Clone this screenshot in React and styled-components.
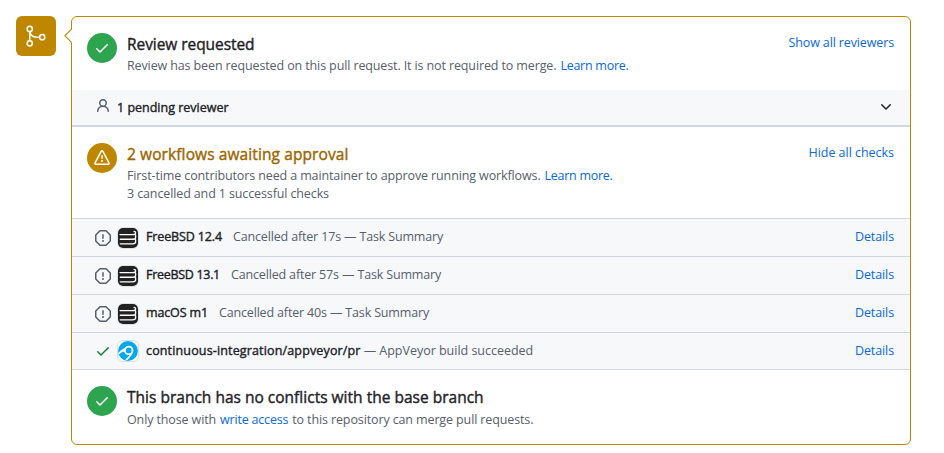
import React from 'react';
import styled, { createGlobalStyle, css } from 'styled-components';

const GlobalStyle = createGlobalStyle`
  * { box-sizing: border-box; }
  body {
    margin: 0;
    background: #fff;
    color: #1f2328;
    font: 400 12.5px/18px "Open Sans", "Noto Sans", sans-serif;
  }
`;

/* A weight between medium and semibold. */
const emphasis = css`
  font-weight: 500;
  -webkit-text-stroke: 0.4px currentColor;
`;

const Timeline = styled.main`
  display: flex;
  align-items: flex-start;
  gap: 15px;
  padding: 16px 33px 8px 16px;
`;

const MergeBadge = styled.div`
  flex: none;
  width: 40px;
  height: 40px;
  border-radius: 6px;
  background: #bf8700;
`;

const Card = styled.div`
  position: relative;
  flex: 1;
  min-width: 0;
  border: 1px solid #bf8700;
  border-radius: 6px;
`;

const Caret = styled.svg`
  position: absolute;
  top: 10px;
  left: -8px;
  display: block;
`;

const Section = styled.section`
  display: flex;
  align-items: flex-start;
  padding: 15px 16px 15px 15px;
`;

const StatusCircle = styled.span`
  flex: none;
  display: flex;
  align-items: center;
  justify-content: center;
  width: 30px;
  height: 30px;
  margin: 1px 10px 0 0;
  border-radius: 50%;
  color: #fff;
  background: ${(p) => (p.$tone === 'attention' ? '#bf8700' : '#2da44e')};
`;

const Body = styled.div`
  flex: 1;
  min-width: 0;
  white-space: nowrap;
`;

const Title = styled.h3`
  ${emphasis}
  margin: 0 0 ${(p) => p.$gap || 1}px;
  font-size: 15.5px;
  line-height: 24px;
  letter-spacing: ${(p) => p.$track}px;
  color: ${(p) => (p.$tone === 'attention' ? '#9a6700' : '#1f2328')};
`;

const Note = styled.p`
  display: flex;
  gap: 4px;
  margin: 0;
  color: #57606a;
`;

const Text = styled.span`
  letter-spacing: ${(p) => p.$track}px;
`;

const Link = styled.a`
  flex: none;
  color: #0969da;
  letter-spacing: ${(p) => p.$track}px;
  white-space: nowrap;
`;

const ToggleLink = styled(Link)`
  margin-top: 1px;
  line-height: 20px;
`;

const ReviewerBar = styled.div`
  display: flex;
  align-items: center;
  height: 37px;
  padding: 0 16px 2px 23px;
  border-bottom: 2px solid #d0d7de;
  background: #f6f8fa;
`;

const ReviewerLabel = styled.strong`
  ${emphasis}
  flex: 1;
  margin-left: 6px;
  padding-top: 2px;
`;

const Glyph = styled.svg`
  flex: none;
  display: block;
  fill: currentColor;
  color: ${(p) => p.$color || 'inherit'};
`;

const PersonGlyph = styled(Glyph)`
  margin-bottom: 2px;
`;

const CheckList = styled.ul`
  margin: 0;
  padding: 0;
  list-style: none;
  border-top: 1px solid #d0d7de;
`;

const CheckRow = styled.li`
  display: flex;
  align-items: center;
  height: 38px;
  padding: 0 16px 0 23px;
  border-bottom: 1px solid #d0d7de;
  background: #f6f8fa;
  white-space: nowrap;

  &:last-child { height: 37px; }
`;

const AppIcon = styled.svg`
  flex: none;
  display: block;
  margin: 0 7px 0 6px;
`;

const CheckText = styled.div`
  flex: 1;
  display: flex;
  gap: ${(p) => p.$gap}px;
  padding-bottom: 1px;
  color: #57606a;
`;

const CheckName = styled.strong`
  ${emphasis}
  color: #1f2328;
  letter-spacing: ${(p) => p.$track}px;
`;

const DetailsLink = styled(Link)`
  padding-bottom: 1px;
`;

const paths = {
  check:
    'M13.78 4.22a.75.75 0 0 1 0 1.06l-7.25 7.25a.75.75 0 0 1-1.06 0L2.22 9.28a.751.751 0 0 1 .018-1.042.751.751 0 0 1 1.042-.018L6 10.94l6.72-6.72a.75.75 0 0 1 1.06 0Z',
  alert:
    'M6.457 1.047c.659-1.234 2.427-1.234 3.086 0l6.082 11.378A1.75 1.75 0 0 1 14.082 15H1.918a1.75 1.75 0 0 1-1.543-2.575Zm1.763.707a.25.25 0 0 0-.44 0L1.698 13.132a.25.25 0 0 0 .22.368h12.164a.25.25 0 0 0 .22-.368Zm.53 3.996v2.5a.75.75 0 0 1-1.5 0v-2.5a.75.75 0 0 1 1.5 0ZM9 11a1 1 0 1 1-2 0 1 1 0 0 1 2 0Z',
  stop:
    'M4.47.22A.749.749 0 0 1 5 0h6c.199 0 .389.079.53.22l4.25 4.25c.141.14.22.331.22.53v6a.749.749 0 0 1-.22.53l-4.25 4.25A.749.749 0 0 1 11 16H5a.749.749 0 0 1-.53-.22L.22 11.53A.749.749 0 0 1 0 11V5c0-.199.079-.389.22-.53Zm.84 1.28L1.5 5.31v5.38l3.81 3.81h5.38l3.81-3.81V5.31L10.69 1.5ZM8 4a.75.75 0 0 1 .75.75v3.5a.75.75 0 0 1-1.5 0v-3.5A.75.75 0 0 1 8 4Zm0 8a1 1 0 1 1 0-2 1 1 0 0 1 0 2Z',
  person:
    'M10.561 8.073a6.005 6.005 0 0 1 3.432 5.142.75.75 0 1 1-1.498.07 4.5 4.5 0 0 0-8.99 0 .75.75 0 0 1-1.498-.07 6.004 6.004 0 0 1 3.431-5.142 3.999 3.999 0 1 1 5.123 0ZM10.5 5a2.5 2.5 0 1 0-5 0 2.5 2.5 0 0 0 5 0Z',
  chevron:
    'M12.78 5.22a.749.749 0 0 1 0 1.06l-4.25 4.25a.749.749 0 0 1-1.06 0L3.22 6.28a.749.749 0 1 1 1.06-1.06L8 8.939l3.72-3.719a.749.749 0 0 1 1.06 0Z',
};

const Icon = ({ name, color, as: Component = Glyph }) => (
  <Component width="16" height="16" viewBox="0 0 16 16" $color={color}>
    <path d={paths[name]} />
  </Component>
);

const MergeIcon = () => (
  <svg width="40" height="40" viewBox="0 0 40 40" fill="none" stroke="#fff" strokeWidth="1.5">
    <circle cx="13.75" cy="12.9" r="2.6" />
    <circle cx="13.75" cy="27.3" r="2.6" />
    <circle cx="26.2" cy="21.2" r="2.6" />
    <path d="M13.75 15.4v9.4M13.75 15.4c.4 3.8 3.4 5.8 7 5.8h3" />
  </svg>
);

const CirrusIcon = () => (
  <AppIcon width="22" height="22" viewBox="0 0 22 22">
    <rect x=".5" y=".5" width="21" height="21" rx="5.5" fill="#fff" stroke="#dfe2e5" />
    <rect x="1" y="1" width="20" height="20" rx="5" fill="#212121" />
    <path
      d="M3 7.6h12.6c2.1 0 3-.6 3-1.7 0-1-.6-1.5-1.5-1.5M3.3 12.2h12.4c2.1 0 2.9-.7 2.9-1.8V8.1M3.3 16.8h12.4c2.1 0 2.9-.7 2.9-1.8v-2.3"
      fill="none"
      stroke="#fff"
      strokeWidth="1.35"
      strokeLinecap="round"
    />
  </AppIcon>
);

const AppVeyorIcon = () => (
  <AppIcon width="22" height="22" viewBox="0 0 22 22">
    <rect x=".5" y=".5" width="21" height="21" rx="5.5" fill="#fff" stroke="#d8dee4" />
    <circle cx="11" cy="11" r="9.9" fill="#00a8ef" />
    <circle cx="11.7" cy="10.4" r="3.8" fill="none" stroke="#fff" strokeWidth="1.8" />
    <path d="M15.9 11.2c-.2 3.3-2.8 6.1-5.4 8.7l-2.4-.5c2.2-1.6 3.8-3.2 5-5.1Z" fill="#fff" />
    <path d="M8.2 8.1C5.6 9 3.6 10.5 1.7 12.7l.3 1.7c2-1.8 3.8-2.7 5.9-3.1Z" fill="#fff" />
  </AppIcon>
);

const checks = [
  { name: 'FreeBSD 12.4', track: -0.13, gap: 11, status: 'Cancelled after 17s — Task Summary', statusTrack: -0.16 },
  { name: 'FreeBSD 13.1', track: -0.3, gap: 11, status: 'Cancelled after 57s — Task Summary', statusTrack: -0.16 },
  { name: 'macOS m1', track: -0.14, gap: 11, status: 'Cancelled after 40s — Task Summary', statusTrack: -0.16 },
  { name: 'continuous-integration/appveyor/pr', track: 0.15, gap: 3, status: '— AppVeyor build succeeded', statusTrack: -0.02, passed: true },
];

export default function App() {
  return (
    <>
      <GlobalStyle />
      <Timeline>
        <MergeBadge>
          <MergeIcon />
        </MergeBadge>
        <Card>
          <Caret width="9" height="18" viewBox="0 0 9 18">
            <path d="M8.5 1.5 1 9l7.5 7.5Z" fill="#fff" />
            <path d="M7.5 2.2.9 8.8l6.6 6.6" fill="none" stroke="#bf8700" strokeWidth="1.1" />
          </Caret>
          <Section>
            <StatusCircle>
              <Icon name="check" />
            </StatusCircle>
            <Body>
              <Title $track={-0.06}>Review requested</Title>
              <Note>
                <Text $track={-0.12}>
                  Review has been requested on this pull request. It is not required to merge.
                </Text>
                <Link $track={-0.27}>Learn more.</Link>
              </Note>
            </Body>
            <ToggleLink $track={-0.13}>Show all reviewers</ToggleLink>
          </Section>
          <ReviewerBar>
            <Icon name="person" color="#57606a" as={PersonGlyph} />
            <ReviewerLabel>1 pending reviewer</ReviewerLabel>
            <Icon name="chevron" />
          </ReviewerBar>
          <Section>
            <StatusCircle $tone="attention">
              <Icon name="alert" />
            </StatusCircle>
            <Body>
              <Title $tone="attention" $track={0.1}>2 workflows awaiting approval</Title>
              <Note>
                <Text $track={-0.12}>
                  First-time contributors need a maintainer to approve running workflows.
                </Text>
                <Link $track={-0.27}>Learn more.</Link>
              </Note>
              <Note>
                <Text $track={-0.12}>3 cancelled and 1 successful checks</Text>
              </Note>
            </Body>
            <ToggleLink $track={-0.03}>Hide all checks</ToggleLink>
          </Section>
          <CheckList>
            {checks.map((check) => (
              <CheckRow key={check.name}>
                <Icon
                  name={check.passed ? 'check' : 'stop'}
                  color={check.passed ? '#1a7f37' : '#57606a'}
                />
                {check.passed ? <AppVeyorIcon /> : <CirrusIcon />}
                <CheckText $gap={check.gap}>
                  <CheckName $track={check.track}>{check.name}</CheckName>
                  <Text $track={check.statusTrack}>{check.status}</Text>
                </CheckText>
                <DetailsLink $track={-0.1}>Details</DetailsLink>
              </CheckRow>
            ))}
          </CheckList>
          <Section>
            <StatusCircle>
              <Icon name="check" />
            </StatusCircle>
            <Body>
              <Title $track={0.01} $gap={2}>This branch has no conflicts with the base branch</Title>
              <Note>
                <Text $track={-0.12}>Only those with</Text>
                <Link $track={-0.2}>write access</Link>
                <Text $track={-0.12}>to this repository can merge pull requests.</Text>
              </Note>
            </Body>
          </Section>
        </Card>
      </Timeline>
    </>
  );
}
